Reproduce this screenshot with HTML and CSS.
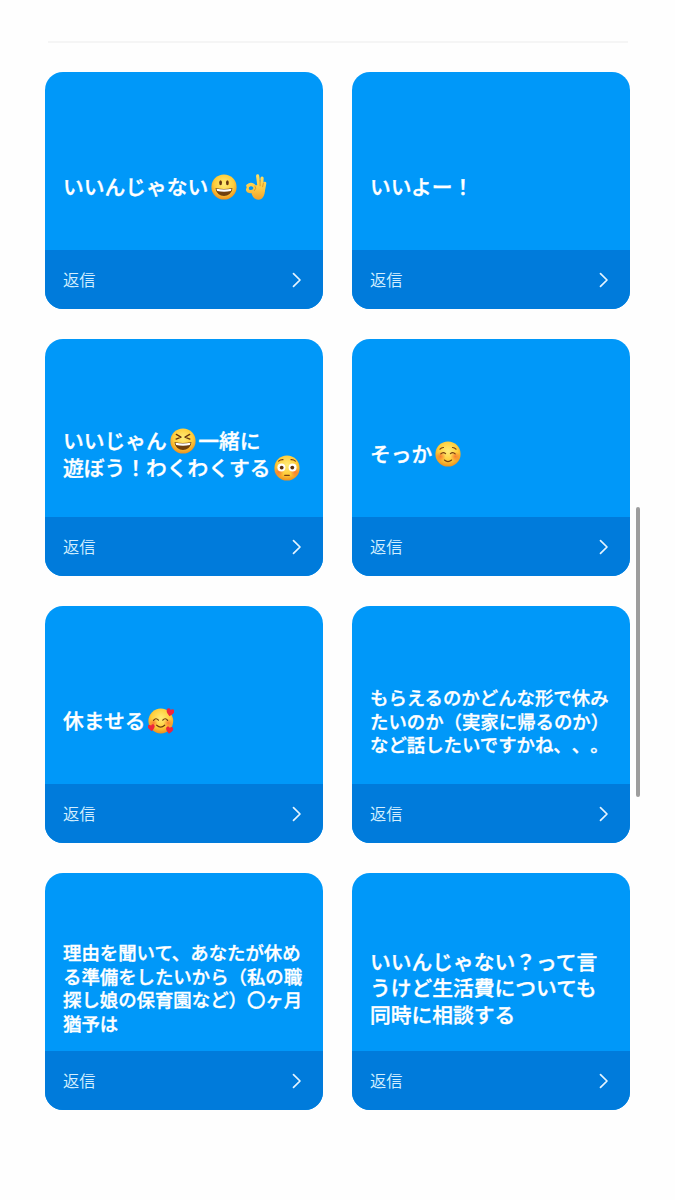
FILE: index.html
```html
<!DOCTYPE html>
<html lang="ja">
<head>
<meta charset="utf-8">
<title>返信</title>
<link rel="stylesheet" href="styles.css">
</head>
<body>
<svg class="defs" width="0" height="0" aria-hidden="true">
  <defs>
    <linearGradient id="skin" gradientUnits="userSpaceOnUse" x1="0" y1="0" x2="0" y2="27"><stop offset="0" stop-color="#ffe066"/><stop offset=".55" stop-color="#fecb45"/><stop offset="1" stop-color="#f0a02c"/></linearGradient>
    <radialGradient id="face" cx=".5" cy=".38" r=".64"><stop offset="0" stop-color="#ffec78"/><stop offset=".6" stop-color="#ffcd3a"/><stop offset="1" stop-color="#ec8b1c"/></radialGradient>
    <radialGradient id="blush"><stop offset="0" stop-color="#f8642d" stop-opacity=".75"/><stop offset="1" stop-color="#f8642d" stop-opacity="0"/></radialGradient>
    <symbol id="heart" viewBox="0 0 10 10"><path d="M5 9.5C2 7 .4 5.3.4 3.2.4.4 3.8-.1 5 2.2 6.2-.1 9.6.4 9.6 3.2 9.6 5.3 8 7 5 9.5Z" fill="#ed263d"/></symbol>
    <symbol id="grin" viewBox="0 0 26 26">
      <circle cx="13" cy="13" r="12.6" fill="url(#face)"/>
      <ellipse cx="9.6" cy="8.7" rx="1.4" ry="2.5" fill="#663510"/><ellipse cx="16.4" cy="8.7" rx="1.4" ry="2.5" fill="#663510"/>
      <path d="M4.6 14.1Q13 16 21.4 14.1C20.7 24.6 5.3 24.6 4.6 14.1Z" fill="#70400f"/>
      <path d="M5.4 14.7Q13 16.2 20.6 14.7L19.8 17Q13 18.5 6.2 17Z" fill="#fff"/>
    </symbol>
    <symbol id="laugh" viewBox="0 0 26 26">
      <circle cx="13" cy="13" r="12.6" fill="url(#face)"/>
      <path d="M6.3 6.4L11 9.1L6.1 11.1M19.7 6.4L15 9.1L19.9 11.1" fill="none" stroke="#663510" stroke-width="1.3" stroke-linecap="round" stroke-linejoin="round"/>
      <path d="M4.6 14.1Q13 16 21.4 14.1C20.7 24.6 5.3 24.6 4.6 14.1Z" fill="#70400f"/>
      <path d="M5.4 14.7Q13 16.2 20.6 14.7L19.8 17Q13 18.5 6.2 17Z" fill="#fff"/>
    </symbol>
    <symbol id="flushed" viewBox="0 0 26 26">
      <circle cx="13" cy="13" r="12.6" fill="url(#face)"/>
      <circle cx="5" cy="17" r="5" fill="url(#blush)"/><circle cx="21" cy="17" r="5" fill="url(#blush)"/>
      <circle cx="7.4" cy="12.5" r="4" fill="#fff"/><circle cx="18.6" cy="12.5" r="4" fill="#fff"/>
      <circle cx="7.7" cy="12.6" r="1.9" fill="#5c310d"/><circle cx="18.3" cy="12.6" r="1.9" fill="#5c310d"/>
      <path d="M4.6 6.2Q6.5 4.4 9 4.6M21.4 6.2Q19.5 4.4 17 4.6M10.7 20.4H15.3" fill="none" stroke="#7a4313" stroke-width="1.1" stroke-linecap="round"/>
    </symbol>
    <symbol id="smile" viewBox="0 0 26 26">
      <circle cx="13" cy="13" r="12.6" fill="url(#face)"/>
      <circle cx="5.6" cy="15.5" r="5" fill="url(#blush)"/><circle cx="20.4" cy="15.5" r="5" fill="url(#blush)"/>
      <path d="M5.8 12.9Q8.2 10.4 10.6 12.7M15.4 12.7Q17.8 10.4 20.2 12.9M9.4 19Q13 22.2 16.6 19M5 8.2Q6.5 6.4 8.5 6.5M21 8.2Q19.5 6.4 17.5 6.5" fill="none" stroke="#774012" stroke-width="1.15" stroke-linecap="round"/>
    </symbol>
    <symbol id="love" viewBox="0 0 26 26">
      <circle cx="12.8" cy="13" r="12.4" fill="url(#face)"/>
      <circle cx="5.4" cy="15" r="4.5" fill="url(#blush)"/><circle cx="20.2" cy="15" r="4.5" fill="url(#blush)"/>
      <path d="M5.6 12.4Q8 9.2 10.4 12.2M14.8 12.2Q17.2 9.2 19.6 12.4M8.7 17.2Q12.7 21 16.7 17.2" fill="none" stroke="#6d3a10" stroke-width="1.2" stroke-linecap="round"/>
      <use href="#heart" x="18" y="0" width="8.6" height="8.6" transform="rotate(12 22 4)"/>
      <use href="#heart" x="-.4" y="16" width="7.6" height="7.6" transform="rotate(-8 3 20)"/>
      <use href="#heart" x="17.6" y="18.2" width="7.8" height="7.8" transform="rotate(8 21 22)"/>
    </symbol>
    <symbol id="ok" viewBox="0 0 26 27">
      <path d="M11.6 16.6C8.8 19.2 4.4 18.5 4.2 16.2" fill="none" stroke="url(#skin)" stroke-width="3.3" stroke-linecap="round"/>
      <path d="M12.4 14.4C10.9 10.8 7.2 9.9 4.6 12.2" fill="none" stroke="url(#skin)" stroke-width="3.5" stroke-linecap="round"/>
      <path d="M5.2 12.6Q3.6 14 4.3 16.4" fill="none" stroke="url(#skin)" stroke-width="2.4" stroke-linecap="round"/>
      <path d="M14.7 2L16.3 14M19.3 4.2L18.7 15M22.1 9.6L20.7 17" fill="none" stroke="url(#skin)" stroke-width="3.3" stroke-linecap="round"/>
      <path d="M11 13.2Q15 9.5 20.6 12.5L22.2 14.6C22.7 21 20.5 26.8 15.5 26.8C11.4 26.8 9 23 8.2 19.4Z" fill="url(#skin)"/>
      <path d="M17.1 6.4L17.3 12.2M20.7 9.4L19.9 13.2M12 12.4Q14 14.7 11.4 17.3" fill="none" stroke="#d58a20" stroke-width=".8" stroke-linecap="round"/>
    </symbol>
    <symbol id="chevron" viewBox="0 0 10 16"><path d="M1.5 1.6L8 8L1.5 14.4" fill="none" stroke="#e4f4ff" stroke-width="1.7" stroke-linecap="round" stroke-linejoin="round"/></symbol>
  </defs>
</svg>
<main class="page">
  <hr class="divider">
  <section class="grid">
    <article class="card">
      <p class="message">いいんじゃない<svg class="emoji"><use href="#grin"/></svg><svg class="emoji"><use href="#ok"/></svg></p>
      <footer class="reply"><span>返信</span><svg class="chevron"><use href="#chevron"/></svg></footer>
    </article>
    <article class="card">
      <p class="message">いいよー！</p>
      <footer class="reply"><span>返信</span><svg class="chevron"><use href="#chevron"/></svg></footer>
    </article>
    <article class="card">
      <p class="message">いいじゃん<svg class="emoji"><use href="#laugh"/></svg>一緒に<br>遊ぼう！わくわくする<svg class="emoji"><use href="#flushed"/></svg></p>
      <footer class="reply"><span>返信</span><svg class="chevron"><use href="#chevron"/></svg></footer>
    </article>
    <article class="card">
      <p class="message">そっか<svg class="emoji"><use href="#smile"/></svg></p>
      <footer class="reply"><span>返信</span><svg class="chevron"><use href="#chevron"/></svg></footer>
    </article>
    <article class="card">
      <p class="message">休ませる<svg class="emoji"><use href="#love"/></svg></p>
      <footer class="reply"><span>返信</span><svg class="chevron"><use href="#chevron"/></svg></footer>
    </article>
    <article class="card">
      <p class="message message-small">もらえるのかどんな形で休み<br>たいのか（実家に帰るのか）<br>など話したいですかね、、。</p>
      <footer class="reply"><span>返信</span><svg class="chevron"><use href="#chevron"/></svg></footer>
    </article>
    <article class="card">
      <p class="message message-small">理由を聞いて、あなたが休め<br>る準備をしたいから（私の職<br>探し娘の保育園など）〇ヶ月<br>猶予は</p>
      <footer class="reply"><span>返信</span><svg class="chevron"><use href="#chevron"/></svg></footer>
    </article>
    <article class="card">
      <p class="message">いいんじゃない？って言<br>うけど生活費についても<br>同時に相談する</p>
      <footer class="reply"><span>返信</span><svg class="chevron"><use href="#chevron"/></svg></footer>
    </article>
  </section>
</main>
<div class="scrollbar"></div>
</body>
</html>
```

FILE: styles.css
```css
* { box-sizing: border-box; }
body {
  margin: 0;
  background: #fefefe;
  font-family: "Noto Sans CJK JP", sans-serif;
}
.defs { position: absolute; }
.page {
  height: 1200px;
  padding: 41px 45px 0;
  overflow: hidden;
}
.divider {
  height: 2px;
  margin: 0 2px 0 3px;
  border: 0;
  background: #f5f5f5;
}
.grid {
  display: grid;
  grid-template-columns: 277.5px 277.5px;
  grid-auto-rows: 237.5px;
  gap: 29.5px;
  margin-top: 28.5px;
}
.card {
  display: flex;
  flex-direction: column;
  overflow: hidden;
  border-radius: 18px;
  background: #0098f9;
}
.message {
  display: block;
  flex: 1;
  align-content: center;
  margin: 0;
  padding: 52px 0 0 18px;
  color: #fff;
  font-size: 20.75px;
  font-weight: 500;
  line-height: 26.7px;
  white-space: nowrap;
  text-spacing-trim: space-all;
  -webkit-text-stroke: .35px #fff;
}
.message-small {
  padding-top: 53px;
  font-size: 18.4px;
  line-height: 23.5px;
}
.emoji {
  width: 26px;
  height: 26px;
  margin: -4px 2.5px -4px 3px;
  vertical-align: -1px;
}
.reply {
  display: flex;
  align-items: center;
  justify-content: space-between;
  height: 59px;
  padding: 0 20.5px 0 18px;
  background: #007bdb;
  color: #d3efff;
  font-size: 16.2px;
  font-weight: 350;
  line-height: 24px;
}
.reply span { padding-bottom: 2px; }
.chevron {
  width: 10px;
  height: 16px;
}
.scrollbar {
  position: absolute;
  top: 507px;
  left: 636px;
  width: 4px;
  height: 290px;
  border-radius: 2px;
  background: #9d9d9d;
}
```
